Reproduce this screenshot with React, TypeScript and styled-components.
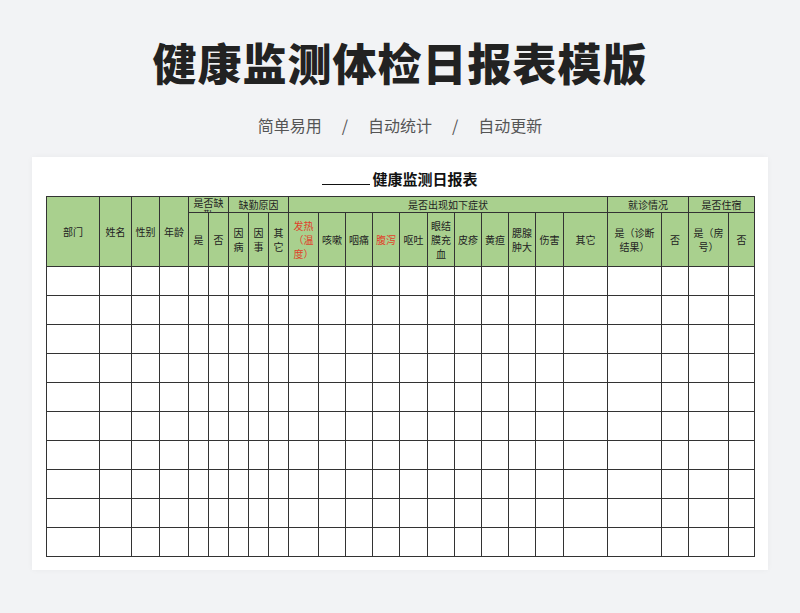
import React from "react";
import styled, { createGlobalStyle } from "styled-components";

const G = createGlobalStyle`
  body{margin:0;background:#f2f3f5;font-family:"Noto Sans CJK SC","Noto Sans",sans-serif;}
`;
const Page = styled.div`width:800px;height:613px;display:flex;flex-direction:column;align-items:center;overflow:hidden;`;
const H1 = styled.h1`margin:36px 0 0;font-size:44px;line-height:52px;font-weight:900;color:#222;letter-spacing:1px;`;
const Sub = styled.div`margin-top:26px;font-size:16px;color:#555;display:flex;gap:20px;line-height:22px;`;
const Card = styled.div`margin-top:21px;width:736px;height:413px;background:#fff;padding:12px 14px 0;box-sizing:border-box;overflow:hidden;box-shadow:0 0 6px rgba(0,0,0,.04);`;
const Title = styled.div`text-align:center;font-size:15px;font-weight:700;color:#111;height:27px;line-height:20px;`;
const U = styled.span`display:inline-block;width:48px;border-bottom:1px solid #111;margin-right:2px;height:15px;vertical-align:baseline;`;
const Table = styled.table`border-collapse:collapse;table-layout:fixed;width:708px;`;
const Th = styled.td<{ red?: boolean }>`background:#a9d08e;border:1px solid #333;font-size:10px;line-height:14px;text-align:center;color:${p => p.red ? "#e0402a" : "#222"};padding:0 2px;overflow:hidden;`;
const Td = styled.td`border:1px solid #333;height:28px;padding:0;font-size:0;line-height:0;`;

const widths = [53,32,28,29,20,20,20,20,20,30,27,27,27,28,27,27,27,27,28,44,54,27,40,26];
export default function App() {
  return (<Page><G />
    <H1>健康监测体检日报表模版</H1>
    <Sub><span>简单易用</span><span>/</span><span>自动统计</span><span>/</span><span>自动更新</span></Sub>
    <Card>
      <Title><U />健康监测日报表</Title>
      <Table>
        <colgroup>{widths.map((w, i) => <col key={i} style={{ width: w }} />)}</colgroup>
        <tbody>
          <tr style={{ height: 16 }}>
            <Th rowSpan={2}>部门</Th><Th rowSpan={2}>姓名</Th><Th rowSpan={2}>性别</Th><Th rowSpan={2}>年龄</Th>
            <Th colSpan={2} style={{ height: 15, lineHeight: "12px", verticalAlign: "top" }}><div style={{ height: 15, overflow: "hidden" }}>是否缺勤</div></Th>
            <Th colSpan={3}>缺勤原因</Th>
            <Th colSpan={11}>是否出现如下症状</Th>
            <Th colSpan={2}>就诊情况</Th>
            <Th colSpan={2}>是否住宿</Th>
          </tr>
          <tr style={{ height: 54 }}>
            <Th>是</Th><Th>否</Th><Th>因<br />病</Th><Th>因<br />事</Th><Th>其<br />它</Th>
            <Th red>发热（温度）</Th><Th>咳嗽</Th><Th>咽痛</Th><Th red>腹泻</Th><Th>呕吐</Th>
            <Th>眼结膜充血</Th><Th>皮疹</Th><Th>黄疸</Th><Th>腮腺肿大</Th><Th>伤害</Th><Th>其它</Th>
            <Th>是（诊断结果）</Th><Th>否</Th><Th>是（房号）</Th><Th>否</Th>
          </tr>
          {Array.from({ length: 10 }).map((_, r) => <tr key={r}>{widths.map((_, c) => <Td key={c} />)}</tr>)}
        </tbody>
      </Table>
    </Card>
  </Page>);
}
